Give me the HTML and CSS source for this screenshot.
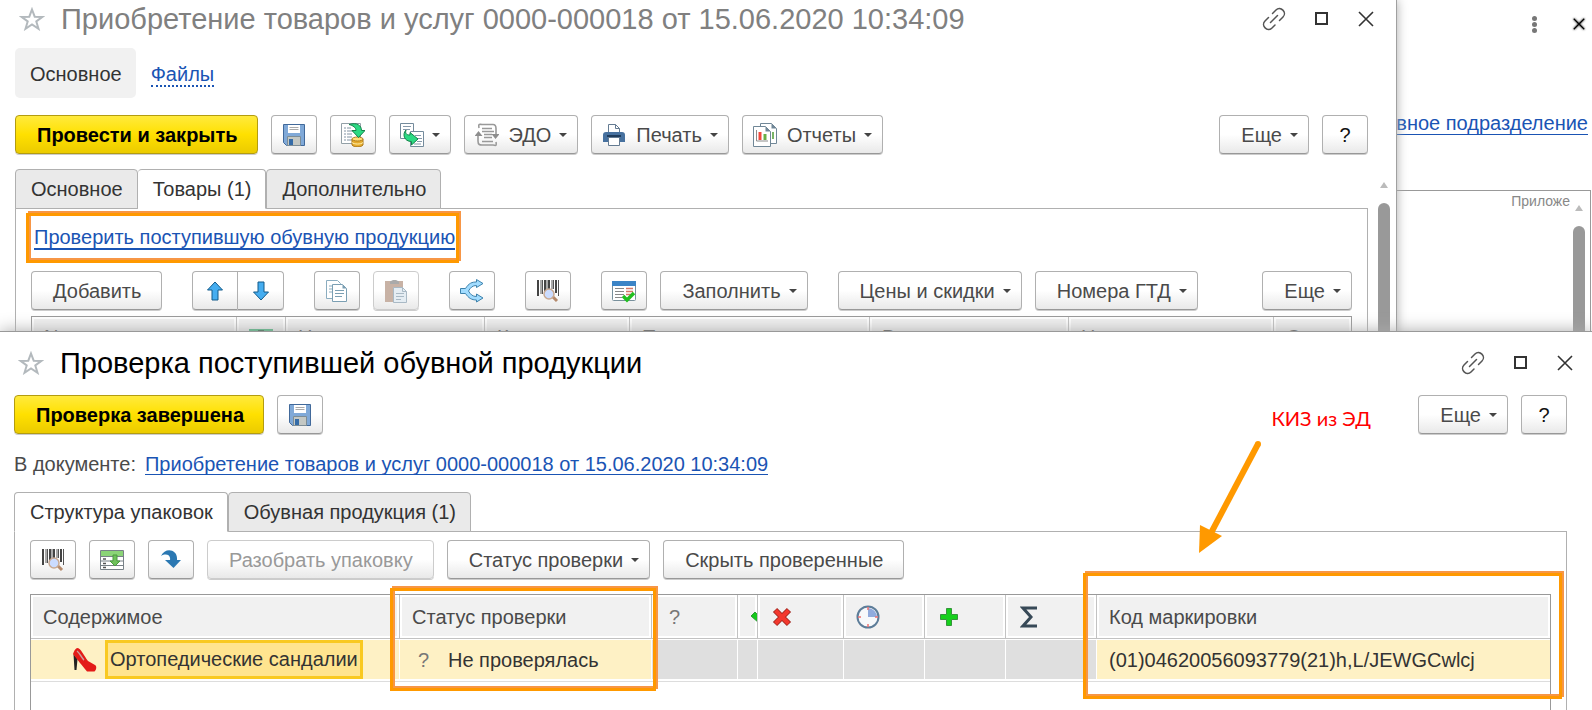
FILE: index.html
```html
<!DOCTYPE html>
<html lang="ru">
<head>
<meta charset="utf-8">
<title>Проверка поступившей обувной продукции</title>
<link rel="stylesheet" href="styles.css">
</head>
<body>
<svg class="sprite" aria-hidden="true">
  <symbol id="star" viewBox="0 0 26 24"><path d="M13 2.5l2.7 7.2 7.7.2-6.1 4.6 2.2 7.3L13 17.5l-6.500 4.300 2.200-7.300L2.600 9.900l7.700-.200z" fill="none" stroke="#b3b9bd" stroke-width="2"/></symbol>
  <symbol id="link" viewBox="0 0 24 24"><g fill="none" stroke="#555" stroke-width="1.500" stroke-linecap="round"><path d="M10.500 6.500l3.500-3.500c4.500-4.500 11.500 2.500 7 7L17.500 13.500"/><path d="M6.500 10.500L3 14c-4.500 4.500 2.500 11.500 7 7l3-3"/><path d="M8.500 15.500l7-7"/></g></symbol>
  <symbol id="max" viewBox="0 0 14 14"><rect x="1" y="1" width="11" height="11" fill="none" stroke="#333" stroke-width="2"/></symbol>
  <symbol id="close" viewBox="0 0 16 16"><path d="M1 1l14 14M15 1L1 15" stroke="#333" stroke-width="1.600"/></symbol>
  <symbol id="floppy" viewBox="0 0 24 24"><path d="M1.500 1.500h21v21h-18l-3-3z" fill="#80a9d8" stroke="#41699a"/><path d="M6 2h12v8H6z" fill="#fff"/><path d="M7.500 4.500h9M7.500 6.500h9" stroke="#aaa"/><path d="M5.500 13.500h13v9h-13z" fill="#c4c8c4" stroke="#7d8d96"/><path d="M7 16h4v6H7z" fill="#356ca8"/></symbol>
  <symbol id="post" viewBox="0 0 24 24"><path d="M.500.500h19v20h-19z" fill="#fff" stroke="#93a0a7"/><path d="M3 5h2M6 5h4M3 8h2M6 8h6M3 11h2M6 11h5M3 14h2M6 14h5M3 17h2M6 17h5" stroke="#8294a4"/><path d="M11 16v6c2 2.500 9 2.500 11 0v-6z" fill="#e6ac2d" stroke="#a9761a"/><ellipse cx="16.500" cy="16" rx="5.500" ry="2" fill="#ffdf7a" stroke="#b17d1f"/><path d="M11 19.500c2 2 9 2 11 0" fill="none" stroke="#fff0b0"/><path d="M8 1.500c8-2.500 12.500 1 12.500 6H24l-6.500 7-6.500-7h4c0-3-3-5-7-6z" fill="#2bda83" stroke="#14824a"/></symbol>
  <symbol id="based" viewBox="0 0 24 24"><path d="M.500.500h13v15h-13z" fill="#fff" stroke="#748b9c"/><path d="M3 3.500h8M3 6.500h7" stroke="#8599aa"/><path d="M10.500 8.500h13v15h-13z" fill="#fff" stroke="#748b9c"/><path d="M15 12.500h6M17 15.500h5M17 18.500h5M14 21h7" stroke="#8599aa"/><path d="M6 7c-1 3 0 5 4 5V9.500l8 6.500-6.500 6v-3.500C4 18.500 2 11 6 7z" fill="#2bda83" stroke="#14824a"/></symbol>
  <symbol id="edo" viewBox="0 0 24 24"><g fill="none" stroke="#999" stroke-width="1.600"><path d="M4 5c-1-5 1-3.500 3-3.500h11c2 0 3 1 3 4V11M21 19c1 5-1 3-3 3H7c-2 0-4 0-4-4v-6"/><path d="M7 5.500h10M7 8.500h12M9 11.500h8M9 14.500h8M7 18.500h11"/></g><path d="M-.500 13L3.500 8l4 5zM16.500 11h8l-4 5z" fill="#8e8e8e"/></symbol>
  <symbol id="print" viewBox="0 0 24 24"><path d="M6.500 10V1.500h7l4 4V10z" fill="#fff" stroke="#647b92"/><path d="M13.500 1.500v4h4" fill="none" stroke="#647b92"/><path d="M4 9h16c2 0 3 1 3 3v7H1v-7c0-2 1-3 3-3z" fill="#47719f"/><path d="M5 13h14" stroke="#1f3c5c" stroke-width="2"/><path d="M6.500 14.500h11v8h-11z" fill="#fff" stroke="#647b92"/></symbol>
  <symbol id="report" viewBox="0 0 24 24"><path d="M7.500.500h11l5 5v15h-16z" fill="#fff" stroke="#708797"/><path d="M18.500.500l5 5h-5z" fill="#708797"/><path d="M20 9v7" stroke="#7ab565" stroke-width="2"/><path d="M.500 3.500h12l5 5v15h-17z" fill="#fff" stroke="#708797"/><path d="M12.500 3.500l5 5h-5z" fill="#708797"/><path d="M3.500 7v11H15" fill="none" stroke="#8c8c8c"/><path d="M7 9v8" stroke="#f1483d" stroke-width="3"/><path d="M12 11v6" stroke="#69af45" stroke-width="3"/></symbol>
  <symbol id="up" viewBox="0 0 18 20"><path d="M9 1l7.500 8H12v10H6V9H1.500z" fill="#45adf0" stroke="#125b8a"/></symbol>
  <symbol id="down" viewBox="0 0 18 20"><path d="M9 19l7.500-8H12V1H6v10H1.500z" fill="#45adf0" stroke="#125b8a"/></symbol>
  <symbol id="copy" viewBox="0 0 24 24"><path d="M1.500 1.500h11l3 3v15h-14z" fill="#fff" stroke="#8badc0"/><path d="M4 7h4M4 10h4M4 13h4" stroke="#8badc0"/><path d="M7.500 5.500h10l4 4v13h-14z" fill="#fff" stroke="#7b9fb3"/><path d="M17.500 5.500v4h4z" fill="#7b9fb3"/><path d="M10 11.500h9M10 14.500h9M10 17.500h7" stroke="#7b9fb3"/></symbol>
  <symbol id="paste" viewBox="0 0 24 24"><path d="M1 2h18v21H1z" fill="#c8b2a5"/><path d="M6 5V2.500L9 1h3l3 1.500V5z" fill="#aaa"/><path d="M9.500 8.500h9l4 4v11h-13z" fill="#e5edf3" stroke="#a9b9c5"/><path d="M18.500 8.500v4h4M12 14.500h8M12 17.500h8M12 20.500h5" fill="none" stroke="#a9b9c5"/></symbol>
  <symbol id="share" viewBox="0 0 26 24"><path d="M1.500 9.500h5C10 4 13 3 17.500 3V.500l6.500 4-6.500 4V6.500c-4 0-6 2-8 5.500 2 3.500 4 5.500 8 5.500v-2.500l6.500 4-6.500 4V21c-5 0-8-2-11-6.500h-5z" fill="#a1dcff" stroke="#3d82ac"/></symbol>
  <symbol id="barcode" viewBox="0 0 24 24"><path d="M2 1v16M9 1v12M13 1v10M20 1v13" stroke="#444" stroke-width="2"/><path d="M5 1v14M6.500 1v14M11 1v9M16 1v9M17.500 1v9M22.500 1v16" stroke="#555"/><path d="M16 17l5 5" stroke="#b58a6c" stroke-width="3"/><circle cx="13" cy="15" r="5" fill="#cbdcff" stroke="#c8a992" stroke-width="1.500"/></symbol>
  <symbol id="fillcheck" viewBox="0 0 24 24"><rect x=".500" y="2.500" width="23" height="19" rx="1" fill="#fff" stroke="#78909c"/><path d="M0 2h24v5H0z" fill="#3c84c6"/><path d="M3 9.500h9M3 12.500h9M3 15.500h9M3 18.500h7" stroke="#888"/><path d="M14 9.500h7M14 12.500h7M14 15.500h5" stroke="#d57867" stroke-width="1.500"/><path d="M11 17l4 4 7-7" fill="none" stroke="#20bf20" stroke-width="3.500"/></symbol>
  <symbol id="fillrow" viewBox="0 0 26 24"><path d="M1.500 2.500h23v19h-23z" fill="#fff" stroke="#788187"/><path d="M2 3h22v5H2z" fill="#8bd477"/><path d="M1 8.500h24M1 13h24M1 17.500h24" stroke="#788187"/><path d="M4 11h3M4 15.500h3M4 19.500h3" stroke="#555" stroke-width="1.500"/><path d="M14 7h4v6h3l-5 5-5-5h3z" fill="#6fc05b" stroke="#4b9b3f"/></symbol>
  <symbol id="column" viewBox="0 0 24 24"><path d="M0 0h24v22H0z" fill="#45b87c"/><path d="M9 1h6v4H9z" fill="#1f5a3b"/></symbol>
  <symbol id="turn" viewBox="0 0 24 24"><path d="M2 8C6-1 19 1 18 12h4l-7.500 8L6 12h5c1-5-4-7-9-4z" fill="#2b78b2"/></symbol>
  <symbol id="shoe" viewBox="0 0 24 24"><path d="M.500 6l4 5L3.500 22H1.500z" fill="#222"/><path d="M4 0c4 0 7 8 11 13l7 4c2 1 1.500 5-.500 6.500H14C11 20 9 17 7 15 5 12 3 10 0 6c1-3 2-5 4-6z" fill="#e31b18"/><path d="M4 3c3 2 5 8 7 9" fill="none" stroke="#c9a0a0" stroke-width="1.500"/></symbol>
  <symbol id="cross" viewBox="0 0 20 20"><path d="M3 3l14 14M17 3L3 17" stroke="#a42a22" stroke-width="6"/><path d="M3.500 3.500l13 13M16.500 3.500l-13 13" stroke="#f3382d" stroke-width="4"/></symbol>
  <symbol id="clock" viewBox="0 0 24 24"><circle cx="12" cy="12" r="10.500" fill="#f7f9fb" stroke="#5d7d99" stroke-width="2"/><path d="M12 12V3a9 9 0 0 1 9 9z" fill="#91abdd"/><path d="M12 2v3M12 19v3M2 12h3M19 12h3" stroke="#ee7070" stroke-width="1.500"/></symbol>
  <symbol id="plus" viewBox="0 0 20 20"><path d="M7.500 1.500h5v6h6v5h-6v6h-5v-6h-6v-5h6z" fill="#15d01b" stroke="#35943b"/></symbol>
  <symbol id="sigma" viewBox="0 0 18 22"><path d="M17 2H3l8 9-8 9h14" fill="none" stroke="#374957" stroke-width="3"/></symbol>
  <symbol id="tick" viewBox="0 0 18 14"><path d="M1 6l4-4 4 4 5-5 3 3-8 9z" fill="#15c81b" stroke="#2f9a35"/></symbol>
</svg>

<main class="desktop">
  <section class="window window-back" aria-label="Список">
    <div class="back-tools">
      <button class="plain kebab" aria-label="Меню"><i></i><i></i><i></i></button>
      <button class="plain" aria-label="Закрыть"><svg class="bold-close" width="12" height="12"><use href="#close"/></svg></button>
    </div>
    <div class="back-link"><a class="link" href="#">Основное подразделение</a></div>
    <div class="back-panel">
      <span class="attach">Приложе</span>
      <div class="scroll"><b></b><i></i></div>
    </div>
  </section>

  <section class="window window-doc">
    <header class="title-row">
      <button class="plain" aria-label="В избранное"><svg width="26" height="24"><use href="#star"/></svg></button>
      <h1 class="muted">Приобретение товаров и услуг 0000-000018 от 15.06.2020 10:34:09</h1>
      <div class="win-tools">
        <button class="plain" aria-label="Ссылка"><svg width="24" height="24"><use href="#link"/></svg></button>
        <button class="plain" aria-label="Развернуть"><svg width="14" height="14"><use href="#max"/></svg></button>
        <button class="plain" aria-label="Закрыть"><svg width="16" height="16"><use href="#close"/></svg></button>
      </div>
    </header>
    <nav class="nav"><span class="nav-current">Основное</span><a class="nav-link" href="#">Файлы</a></nav>
    <div class="bar">
      <button class="btn primary">Провести и закрыть</button>
      <button class="btn icon" aria-label="Записать"><svg width="24" height="24"><use href="#floppy"/></svg></button>
      <button class="btn icon" aria-label="Провести"><svg width="24" height="24"><use href="#post"/></svg></button>
      <button class="btn lead drop" aria-label="Создать на основании"><svg width="24" height="24"><use href="#based"/></svg></button>
      <button class="btn lead drop"><svg width="24" height="24"><use href="#edo"/></svg>ЭДО</button>
      <button class="btn lead drop"><svg width="24" height="24"><use href="#print"/></svg>Печать</button>
      <button class="btn lead drop"><svg width="24" height="24"><use href="#report"/></svg>Отчеты</button>
      <button class="btn drop push">Еще</button>
      <button class="btn icon">?</button>
    </div>
    <div class="doc-body">
      <div class="tabs"><button class="tab">Основное</button><button class="tab active">Товары (1)</button><button class="tab">Дополнительно</button></div>
      <div class="panel">
        <div class="check-link"><a class="link strong" href="#">Проверить поступившую обувную продукцию</a></div>
        <div class="bar groups">
          <button class="btn">Добавить</button>
          <div class="joined"><button class="btn icon" aria-label="Вверх"><svg width="18" height="20"><use href="#up"/></svg></button><button class="btn icon" aria-label="Вниз"><svg width="18" height="20"><use href="#down"/></svg></button></div>
          <div class="group"><button class="btn icon" aria-label="Копировать"><svg width="24" height="24"><use href="#copy"/></svg></button><button class="btn icon" disabled aria-label="Вставить"><svg width="24" height="24"><use href="#paste"/></svg></button></div>
          <button class="btn icon" aria-label="Разбить"><svg width="26" height="24"><use href="#share"/></svg></button>
          <button class="btn icon" aria-label="Штрихкод"><svg width="24" height="24"><use href="#barcode"/></svg></button>
          <div class="group"><button class="btn icon" aria-label="Проверить"><svg width="24" height="24"><use href="#fillcheck"/></svg></button><button class="btn drop">Заполнить</button></div>
          <div class="group"><button class="btn drop">Цены и скидки</button><button class="btn drop">Номера ГТД</button></div>
          <button class="btn drop push">Еще</button>
        </div>
        <table class="goods">
          <colgroup><col class="g1"><col class="g2"><col class="g3"><col class="g4"><col class="g5"><col class="g6"><col class="g7"><col></colgroup>
          <thead><tr><th>N</th><th><svg width="24" height="24"><use href="#column"/></svg></th><th>Номенклатура</th><th>Количество</th><th>Первичная</th><th>Вид цены</th><th>Цена</th><th>Сумма</th></tr></thead>
        </table>
      </div>
      <div class="scroll"><b></b><i></i></div>
    </div>
  </section>

  <section class="window window-check">
    <header class="title-row">
      <button class="plain" aria-label="В избранное"><svg width="26" height="24"><use href="#star"/></svg></button>
      <h1>Проверка поступившей обувной продукции</h1>
      <div class="win-tools">
        <button class="plain" aria-label="Ссылка"><svg width="24" height="24"><use href="#link"/></svg></button>
        <button class="plain" aria-label="Развернуть"><svg width="14" height="14"><use href="#max"/></svg></button>
        <button class="plain" aria-label="Закрыть"><svg width="16" height="16"><use href="#close"/></svg></button>
      </div>
    </header>
    <div class="bar">
      <button class="btn primary">Проверка завершена</button>
      <button class="btn icon" aria-label="Записать"><svg width="24" height="24"><use href="#floppy"/></svg></button>
      <button class="btn drop push">Еще</button>
      <button class="btn icon">?</button>
    </div>
    <p class="doc-ref"><span>В документе:</span><a class="link" href="#">Приобретение товаров и услуг 0000-000018 от 15.06.2020 10:34:09</a></p>
    <div class="tabs"><button class="tab active">Структура упаковок</button><button class="tab">Обувная продукция (1)</button></div>
    <div class="panel">
      <div class="bar">
        <button class="btn icon" aria-label="Штрихкод"><svg width="24" height="24"><use href="#barcode"/></svg></button>
        <button class="btn icon" aria-label="Заполнить"><svg width="26" height="24"><use href="#fillrow"/></svg></button>
        <button class="btn icon" aria-label="Перейти"><svg width="24" height="24"><use href="#turn"/></svg></button>
        <button class="btn" disabled>Разобрать упаковку</button>
        <button class="btn drop">Статус проверки</button>
        <button class="btn">Скрыть проверенные</button>
      </div>
      <div class="packs-box">
        <table class="packs">
          <colgroup><col class="p1"><col class="p2"><col class="p3"><col class="p4"><col class="p3"><col class="p5"><col class="p5"><col class="p6"><col></colgroup>
          <thead><tr><th>Содержимое</th><th>Статус проверки</th><th class="mark wide">?</th><th><svg width="18" height="14"><use href="#tick"/></svg></th><th class="sign"><svg width="20" height="20"><use href="#cross"/></svg></th><th><svg width="24" height="24"><use href="#clock"/></svg></th><th class="sign"><svg width="20" height="20"><use href="#plus"/></svg></th><th class="sign"><svg width="18" height="22"><use href="#sigma"/></svg></th><th>Код маркировки</th></tr></thead>
          <tbody><tr>
            <td class="item"><div><svg width="24" height="24"><use href="#shoe"/></svg><span>Ортопедические сандалии</span></div></td>
            <td class="status"><span class="mark">?</span>Не проверялась</td>
            <td class="off"></td><td class="off"></td><td class="off"></td><td class="off"></td><td class="off"></td><td class="off"></td>
            <td>(01)04620056093779(21)h,L/JEWGCwlcj</td>
          </tr></tbody>
        </table>
      </div>
    </div>
    <div class="frame frame-status"></div>
    <div class="frame frame-code"></div>
    <div class="note">КИЗ из ЭД</div>
    <svg class="arrow" width="66" height="116" viewBox="0 0 66 116"><path d="M61 5L14 94" stroke="#ff9900" stroke-width="6"/><circle cx="61" cy="5" r="3" fill="#ff9900"/><path d="M3 86l22 11L2 114z" fill="#ff9900"/></svg>
  </section>
</main>
</body>
</html>
```
FILE: styles.css
```css
* { box-sizing: border-box; }
body { margin: 0; font: 20px/24px "Liberation Sans", Arial, sans-serif; color: #333; background: #fff; }
button { font: inherit; color: inherit; margin: 0; }
.sprite { display: none; }
svg { display: block; flex: none; overflow: visible; }
.desktop { position: relative; height: 100vh; overflow: hidden; }
.window { position: absolute; background: #fff; }
.window-back { inset: 0; }
.window-doc { top: 0; bottom: 0; left: 0; right: 195px; padding: 0 28px 0 15px; border-right: 1px solid #a0a0a0; box-shadow: 0 0 10px #aaa; }
.window-check { top: 331px; bottom: 0; left: 0; right: 0; padding: 11px 25px 0 14px; border-top: 1px solid #999; box-shadow: 0 0 16px #aaa; display: flex; flex-direction: column; }

.plain { border: 0; padding: 0; background: none; display: flex; }
.link { color: #1a54b4; text-decoration: none; border-bottom: 1px solid; line-height: 20px; }
.link.strong { border-bottom-width: 2px; }

.back-tools { display: flex; justify-content: flex-end; align-items: center; gap: 36px; padding: 15px 7px 0 0; height: 33px; }
.kebab { flex-direction: column; gap: 1px; }
.kebab i { width: 5px; height: 5px; border-radius: 50%; background: #777; }
.bold-close { filter: brightness(0) drop-shadow(0 0 1px #000); }
.back-link { padding: 78px 4px 0 0; text-align: right; }
.back-panel { display: flex; justify-content: flex-end; margin: 55px 1px 0 0; border: 1px solid #999; height: 600px; }
.attach { font-size: 14px; line-height: 20px; color: #888; }
.back-panel .scroll { margin: 14px 5px 0 3px; }

.title-row { display: flex; align-items: center; height: 38px; padding-left: 4px; gap: 16px; }
.window-check .title-row { height: 40px; }
h1 { margin: 0; font-size: 29px; line-height: 36px; font-weight: 400; color: #000; white-space: nowrap; }
h1.muted { color: #808080; }
.win-tools { display: flex; align-items: center; gap: 29px; margin-left: auto; margin-right: -6px; }

.nav { display: flex; align-items: center; gap: 15px; margin-top: 10px; height: 50px; }
.nav-current { background: #f1f1f1; border-radius: 5px; padding: 14px 14px 12px 15px; }
.nav-link { color: #1a54b4; text-decoration: none; border-bottom: 2px dotted; line-height: 22px; padding-top: 3px; }

.bar { display: flex; gap: 13px; }
.nav + .bar { margin-top: 17px; }
.window-check > .bar { margin-top: 12px; }
.groups { gap: 30px; }
.group { display: flex; gap: 13px; }
.push { margin-left: auto; }
.btn { display: flex; align-items: center; justify-content: center; height: 39px; padding: 0 20px 0 21px; border: 1px solid #b0b0b0; border-bottom-color: #989898; border-radius: 4px; background: linear-gradient(#fff 50%, #e9e9e9); box-shadow: 0 1px #ccc; color: #4a4a4a; white-space: nowrap; }
.btn.icon { width: 46px; padding: 0; color: #111; }
.btn.lead { padding-left: 10px; gap: 10px; }
.btn.drop { padding-right: 10px; }
.btn.drop::after { content: ""; border: 4px solid transparent; border-top-color: #444; border-bottom: 0; margin-left: 8px; }
.btn.lead.drop::after { margin-left: -2px; }
.btn.primary { padding: 0 19px 0 21px; font-weight: 700; color: #000; border-color: #b39c10; background: linear-gradient(#ffea3d, #ffe000 50%, #ebcb00); }
.btn:disabled { color: #999; border-color: #ccc; }
.joined { display: flex; }
.joined .btn:first-child { border-radius: 4px 0 0 4px; }
.joined .btn + .btn { border-left: 0; border-radius: 0 4px 4px 0; }

.doc-body { position: relative; margin-top: 15px; }
.tabs { display: flex; position: relative; }
.tab { height: 40px; padding: 0 14px 0 15px; border: 1px solid #b0b0b0; border-radius: 4px 4px 0 0; background: #eaeaea; white-space: nowrap; }
.tab + .tab { border-left: 0; }
.tab.active { background: #fff; border-bottom-color: #fff; }
.tab.active + .tab { border-left: 1px solid #b0b0b0; }
.panel { margin-top: -1px; border: 1px solid #b0b0b0; padding: 8px 15px 0; }
.doc-body .panel { height: 500px; padding-top: 2px; }
.check-link { position: relative; display: inline-block; margin-left: -5px; padding: 14px 6px 14px 8px; }
.check-link::before, .check-link::after, .frame::before, .frame::after { content: ""; position: absolute; inset: 0 0 2px 2px; border: 3px solid #f79646; pointer-events: none; }
.check-link::after, .frame::after { inset: 2px 2px 0 0; border-color: #ff9900; }
.check-link + .bar { margin-top: 8px; }
.doc-body > .scroll { position: absolute; right: -22px; top: 13px; }
.scroll { width: 12px; }
.scroll b { display: block; width: 0; margin: 0 auto; border: 4px solid transparent; border-bottom: 6px solid #bbb; border-top: 0; }
.scroll i { display: block; height: 500px; margin-top: 15px; border-radius: 6px; background: #999; }

table { width: 100%; border-collapse: separate; border-spacing: 0; table-layout: fixed; }
th, td { text-align: left; font-weight: 400; white-space: nowrap; overflow: hidden; }
th { background: #f1f1f1; border-right: 1px solid #c2c2c2; border-bottom: 1px solid #c2c2c2; box-shadow: inset 0 0 0 2px #fff; padding: 0 12px; height: 44px; color: #4a4a4a; }
th:last-child { border-right: 0; }
.goods { margin-top: 6px; border: 1px solid #999; }
.goods th { vertical-align: top; padding-top: 8px; }
.goods svg { margin-top: 4px; }
.g1 { width: 205px; } .g2 { width: 49px; } .g3 { width: 199px; } .g4 { width: 145px; } .g5 { width: 240px; } .g6 { width: 199px; } .g7 { width: 205px; }

.doc-ref { display: flex; align-items: center; gap: 9px; margin: 18px 0 16px; color: #4a4a4a; }
.window-check > .panel { flex: 1; display: flex; flex-direction: column; border-bottom: 0; }
.packs-box { flex: 1; margin-top: 15px; border: 1px solid #999; border-bottom: 0; }
.packs td { background: #fef1c5; border: solid #fff; border-width: 1px 1px 0 0; height: 40px; padding: 0 12px; box-shadow: 0 2px #fff, 0 3px #ddd; }
.packs td:last-child { border-right: 0; }
.packs td.off { background: #dfdfdf; }
.packs td.item { padding: 0 0 0 42px; }
.packs .wide { padding-left: 17px; }
.packs .sign { padding-left: 14px; }
.item div { display: flex; align-items: center; gap: 8px; }
.item span { height: 39px; padding: 4px 2px; border: 3px solid #f9c921; background: #ffe48f; }
.mark { color: #777; }
.status .mark { display: inline-block; width: 30px; padding-left: 6px; box-sizing: content-box; }
.p1 { width: 369px; } .p2 { width: 252px; } .p3 { width: 86px; } .p4 { width: 20px; } .p5 { width: 81px; } .p6 { width: 91px; }

.frame { position: absolute; pointer-events: none; }
.frame-status { left: 390px; width: 268px; top: 254px; height: 105px; }
.frame-code { right: 28px; width: 481px; top: 239px; height: 128px; }
.note { position: absolute; right: 221px; top: 73px; font: 20px/26px Lato, "Open Sans", sans-serif; color: #f00; }
.arrow { position: absolute; right: 329px; top: 107px; }
```
